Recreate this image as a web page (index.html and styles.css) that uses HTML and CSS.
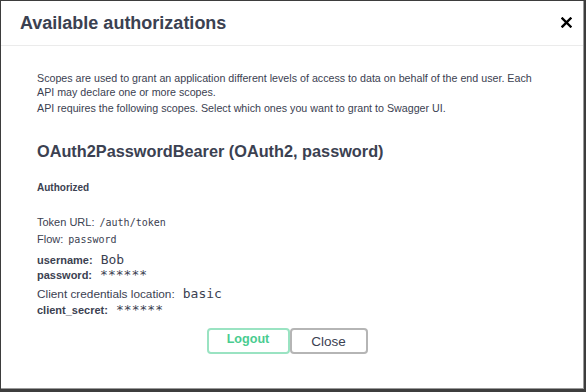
FILE: index.html
```html
<!DOCTYPE html>
<html lang="en">
<head>
  <meta charset="UTF-8">
  <title>Available authorizations</title>
  <link rel="stylesheet" href="styles.css">
</head>
<body>
  <div class="modal">
    <div class="modal-header">
      <h3>Available authorizations</h3>
      <button class="close-x" aria-label="Close">
        <svg width="11" height="11" viewBox="0 0 11 11"><path d="M1.5 1.5 L9.5 9.5 M9.5 1.5 L1.5 9.5" stroke="#000" stroke-width="2.4" stroke-linecap="square"/></svg>
      </button>
    </div>

    <div class="modal-body">
      <p class="scope-text">Scopes are used to grant an application different levels of access to data on behalf of the end user. Each API may declare one or more scopes.</p>
      <p class="scope-text">API requires the following scopes. Select which ones you want to grant to Swagger UI.</p>

      <h4>OAuth2PasswordBearer (OAuth2, password)</h4>
      <h6>Authorized</h6>

      <p class="info">Token URL: <code>/auth/token</code></p>
      <p class="info">Flow: <code>password</code></p>

      <div class="creds">
        <div class="row"><label class="bold">username:</label> <code class="value">Bob</code></div>
        <div class="row"><label class="bold">password:</label> <code class="value">******</code></div>
        <div class="row loc"><label>Client credentials location:</label> <code class="value">basic</code></div>
        <div class="row"><label class="bold">client_secret:</label> <code class="value">******</code></div>
      </div>

      <!-- 버튼 -->
      <div class="btn-wrapper">
        <button class="btn logout">Logout</button>
        <button class="btn close">Close</button>
      </div>
    </div>
  </div>
</body>
</html>
```

FILE: styles.css
```css
/* 기본 스타일 */
body {
  margin: 0;
  background-color: #3d3d3d;
  font-family: "Liberation Sans", Arial, sans-serif;
  color: #3b4151;
  padding: 1px 2px 3px 1px;
  height: 100vh;
  box-sizing: border-box;
}

.modal {
  background-color: #fff;
  height: 100%;
  border-right: 1px solid #9a9a9a;
  border-bottom: 1px solid #9a9a9a;
  box-sizing: border-box;
}

.modal-header {
  display: flex;
  align-items: center;
  justify-content: space-between;
  height: 44px;
  padding: 0 11px 0 19px;
  border-bottom: 1px solid #ebebeb;
}

.modal-header h3 {
  margin: 0;
  font-size: 18px;
  font-weight: bold;
  color: #3b4151;
  padding-top: 1px;
}

.close-x {
  background: none;
  border: none;
  padding: 0;
  display: flex;
  margin-top: -1px;
}

.modal-body {
  padding: 25px 36px 0 36px;
}

.scope-text {
  font-size: 10.7px;
  line-height: 14px;
  margin: 0 0 2px 0;
}

h4 {
  font-size: 16.3px;
  font-weight: bold;
  margin: 25px 0 0 0;
  line-height: 22px;
}

h6 {
  font-size: 10px;
  font-weight: bold;
  margin: 20px 0 21px 0;
}

.info {
  font-size: 11px;
  margin: 0;
  height: 17px;
  line-height: 17px;
}

.info code {
  font-family: "DejaVu Sans Mono", monospace;
  font-size: 10px;
  margin-left: 2px;
}

.creds {
  margin-top: 4px;
}

.row {
  font-size: 11px;
  line-height: 15px;
  height: 15px;
}

.row.loc {
  margin-top: 4px;
  height: 16px;
}

.row.loc label {
  font-size: 11.8px;
}

.row label.bold {
  font-weight: bold;
}

.row .value {
  font-family: "DejaVu Sans Mono", monospace;
  font-size: 13px;
  margin-left: 5px;
  color: #3b4151;
}

.btn-wrapper {
  display: flex;
  justify-content: center;
  padding-top: 11px;
  margin-left: -10px;
}

.btn {
  font-family: "Liberation Sans", Arial, sans-serif;
  font-size: 12.6px;
  font-weight: bold;
  height: 26px;
  background: #fff;
  border-radius: 4px;
  border: 2px solid;
  padding: 0;
  box-sizing: border-box;
  cursor: pointer;
}

.logout {
  width: 83px;
  color: #49cc90;
  border-color: #9ae3c2;
  padding-bottom: 4px;
}

.close {
  width: 78px;
  color: #3b4151;
  border-color: #b5b5b5;
  font-weight: normal;
  font-size: 13.5px;
}
```
